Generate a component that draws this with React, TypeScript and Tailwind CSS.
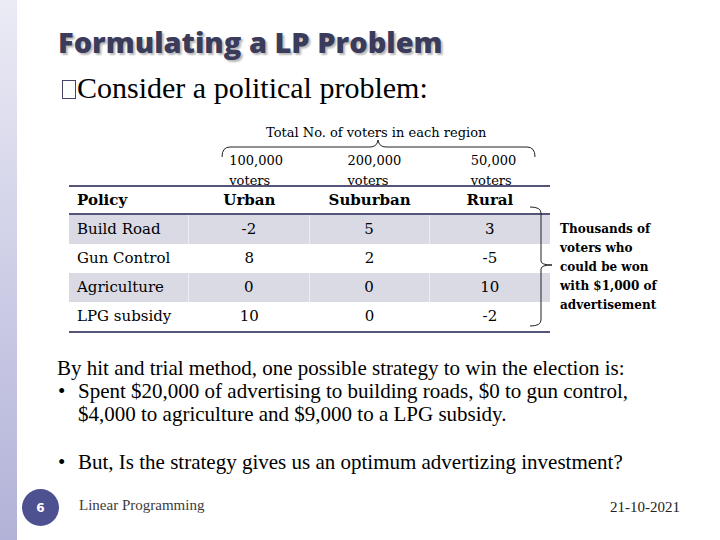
import React from "react";

const serif = "font-['DejaVu_Serif',serif]";

const rows: { p: string; v: string[]; shade: boolean }[] = [
  { p: "Build Road", v: ["-2", "5", "3"], shade: true },
  { p: "Gun Control", v: ["8", "2", "-5"], shade: false },
  { p: "Agriculture", v: ["0", "0", "10"], shade: true },
  { p: "LPG subsidy", v: ["10", "0", "-2"], shade: false },
];

export default function App() {
  return (
    <div className="relative flex h-[540px] w-[720px] overflow-hidden bg-white">
      <div className="w-[17px] shrink-0 bg-linear-to-b from-[#ebebf5] to-[#b2b2d8]" />
      <div className="relative flex flex-1 flex-col">
        {/* Title */}
        <h1 className="pl-[41px] pt-[25px] font-['Open_Sans',sans-serif] text-[29px] font-extrabold leading-[34px] text-[#3b3b5c] [text-shadow:2px_2px_2px_#b8b8b8]">
          Formulating a LP Problem
        </h1>
        <div className="mt-[12px] flex items-center pl-[45px] font-['Liberation_Serif',serif] text-[30px] leading-[34px] text-black">
          <span className="mr-[1px] mt-[2px] inline-block h-[19px] w-[14px] border-[1.5px] border-[#44446c]" />
          <span>Consider a political problem:</span>
        </div>

        {/* Table area */}
        <div className="relative">
          <div className={`mt-[20px] pl-[249px] ${serif} text-[13px] leading-[16px] text-black`}>
            Total No. of voters in each region
          </div>

          {/* voters labels */}
          <div className={`ml-[52px] mt-[10px] grid h-[34px] w-[481px] grid-cols-4 overflow-hidden ${serif} text-[13px] leading-[20px] text-black`}>
            <div />
            <div className="pl-[40px]">100,000<br />voters</div>
            <div className="pl-[38px]">200,000<br />voters</div>
            <div className="pl-[41px]">50,000<br />voters</div>
          </div>

          <div className="flex items-start">
            <div className={`ml-[52px] w-[481px] border-y-2 border-[#55557a] ${serif} text-black`}>
              <div className="grid h-[28px] grid-cols-4 border-b-2 border-[#55557a] text-[15px] font-bold leading-[26px]">
                <div className="pl-[8px]">Policy</div>
                <div className="text-center">Urban</div>
                <div className="text-center">Suburban</div>
                <div className="text-center">Rural</div>
              </div>
              {rows.map((r) => (
                <div
                  key={r.p}
                  className={`grid h-[29px] grid-cols-4 text-[15px] leading-[29px] ${r.shade ? "bg-[#dadae5]" : "bg-white"}`}
                >
                  <div className={`pl-[8px] ${r.shade ? "border-r border-[#ededf3]" : ""}`}>{r.p}</div>
                  <div className={`text-center ${r.shade ? "border-r border-[#ededf3]" : ""}`}>{r.v[0]}</div>
                  <div className={`text-center ${r.shade ? "border-r border-[#ededf3]" : ""}`}>{r.v[1]}</div>
                  <div className="text-center">{r.v[2]}</div>
                </div>
              ))}
            </div>
            <div className={`ml-[10px] mt-[35px] ${serif} text-[12px] font-bold leading-[19px] text-black`}>
              Thousands of<br />voters who<br />could be won<br />with $1,000 of<br />advertisement
            </div>
          </div>

          {/* braces */}
          <svg className="absolute left-0 top-0" width="703" height="360" viewBox="17 106 703 360" fill="none">
            <path
              d="M222 158 Q222 148 230 148 L370 148 Q377 148 378 141 Q379 148 386 148 L527 148 Q535 148 535 158"
              stroke="#222"
              strokeWidth="1"
            />
            <path
              d="M530 208 Q541 208 541 214 L541 262 Q541 266 552 266 Q541 266 541 270 L541 321 Q541 327 530 327"
              stroke="#222"
              strokeWidth="1"
            />
          </svg>
        </div>

        {/* body text */}
        <div className="mt-[24px] pl-[40px] font-['Liberation_Serif',serif] text-[21px] leading-[23px] text-black">
          <div className="whitespace-nowrap">By hit and trial method, one possible strategy to win the election is:</div>
          <div className="flex whitespace-nowrap">
            <span className="w-[21px] shrink-0 pl-[1px]">•</span>
            <span>
              Spent $20,000 of advertising to building roads, $0 to gun control,
              <br />
              $4,000 to agriculture and $9,000 to a LPG subsidy.
            </span>
          </div>
          <div className="mt-[25px] flex whitespace-nowrap">
            <span className="w-[21px] shrink-0 pl-[1px]">•</span>
            <span>But, Is the strategy gives us an optimum advertizing investment?</span>
          </div>
        </div>

        {/* footer */}
        <div className="mt-auto flex items-center pb-[14px]">
          <div className="ml-[5px] flex h-[37px] w-[37px] items-center justify-center rounded-full bg-[#4e5190] font-['DejaVu_Sans',sans-serif] text-[12px] font-bold text-white">
            6
          </div>
          <div className="mb-[5px] ml-[20px] font-['Liberation_Serif',serif] text-[15px] text-[#3c3c3c]">
            Linear Programming
          </div>
          <div className="mb-[1px] ml-auto mr-[40px] font-['Liberation_Serif',serif] text-[15px] text-[#222]">
            21-10-2021
          </div>
        </div>
      </div>
    </div>
  );
}
